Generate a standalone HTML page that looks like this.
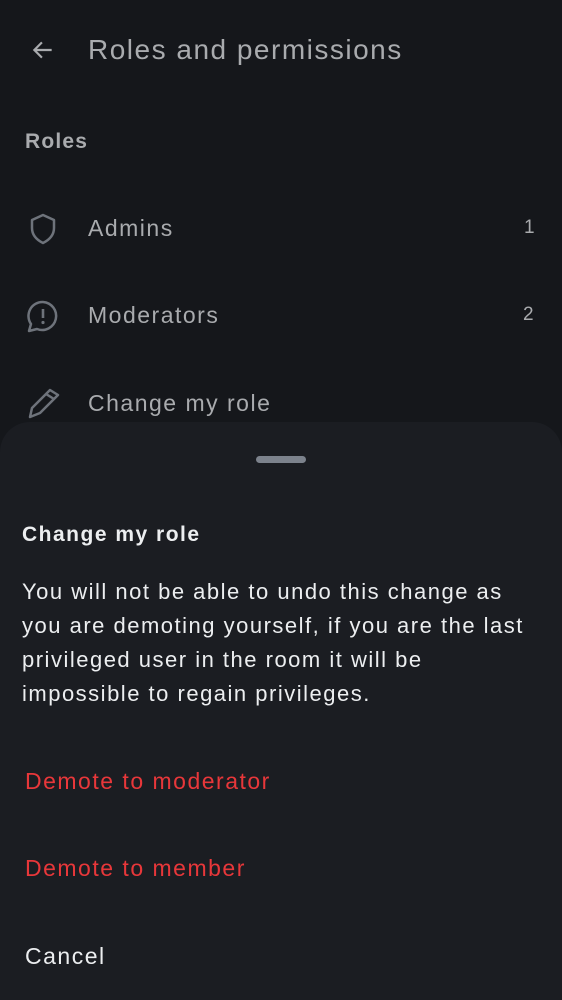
<!DOCTYPE html>
<html><head><style>
*{margin:0;padding:0;box-sizing:border-box}
html,body{width:562px;height:1000px;overflow:hidden}
body{background:#15171b;font-family:"Liberation Sans",sans-serif;position:relative;letter-spacing:1.5px}
.t{position:absolute;white-space:nowrap}
.dim{color:#a9abae}
svg{position:absolute}
.sheet{position:absolute;left:0;top:422px;width:562px;height:578px;background:#1b1d22;border-radius:30px 30px 0 0}
</style></head><body>
<svg style="left:30px;top:37px" width="26" height="26" viewBox="0 0 24 24"><path d="M20 12H5M11 5l-7 7 7 7" fill="none" stroke="#a9abae" stroke-width="2"/></svg>
<div class="t dim" style="left:88px;top:34px;font-size:28px">Roles and permissions</div>
<div class="t dim" style="left:25px;top:130px;font-size:21px;font-weight:bold;letter-spacing:1.2px">Roles</div>
<svg style="left:28px;top:212px" width="30" height="34" viewBox="0 0 30 34"><path d="M15 3L4 8v8c0 7 5 12 11 15 6-3 11-8 11-15V8z" fill="none" stroke="#6e737b" stroke-width="2.5" stroke-linejoin="round"/></svg>
<div class="t dim" style="left:88px;top:215px;font-size:23px">Admins</div>
<div class="t dim" style="left:524px;top:217px;font-size:19px">1</div>
<svg style="left:26px;top:299px" width="34" height="34" viewBox="0 0 34 34"><path d="M17 3a14 14 0 1 1-6 27L3 32l2-7A14 14 0 0 1 17 3z" fill="none" stroke="#6e737b" stroke-width="2.5" stroke-linejoin="round"/><path d="M17 10v9" stroke="#6e737b" stroke-width="2.6"/><circle cx="17" cy="23.5" r="1.6" fill="#6e737b"/></svg>
<div class="t dim" style="left:88px;top:302px;font-size:23px">Moderators</div>
<div class="t dim" style="left:523px;top:304px;font-size:19px">2</div>
<svg style="left:27px;top:386px" width="34" height="34" viewBox="0 0 34 34"><path d="M3 31l2-9L23 4l8 5-18 18z" fill="none" stroke="#6e737b" stroke-width="2.5" stroke-linejoin="round"/><path d="M19 8l8 5" stroke="#6e737b" stroke-width="2.5"/></svg>
<div class="t dim" style="left:88px;top:390px;font-size:23px">Change my role</div>
<div class="sheet"></div>
<div style="position:absolute;left:256px;top:456px;width:50px;height:7px;border-radius:4px;background:#7c828c"></div>
<div class="t" style="left:22px;top:523px;font-size:21px;color:#eceef0;font-weight:bold">Change my role</div>
<div class="t" style="left:22px;top:575px;font-size:22px;color:#eceef0;line-height:34px;white-space:normal;width:505px">You will not be able to undo this change as you are demoting yourself, if you are the last privileged user in the room it will be impossible to regain privileges.</div>
<div class="t" style="left:25px;top:768px;font-size:23px;color:#e8373a">Demote to moderator</div>
<div class="t" style="left:25px;top:855px;font-size:23px;color:#e8373a">Demote to member</div>
<div class="t" style="left:25px;top:943px;font-size:23px;color:#eceef0">Cancel</div>
</body></html>
